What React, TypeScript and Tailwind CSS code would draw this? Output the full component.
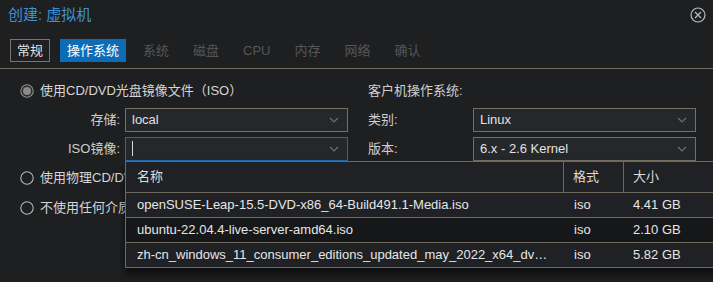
import React from "react";

const FONT = { fontFamily: '"Liberation Sans", "Noto Sans CJK SC", sans-serif' };

function Chevron() {
  return (
    <svg width="10" height="6" viewBox="0 0 10 6" className="shrink-0">
      <path d="M1 1 L5 5 L9 1" fill="none" stroke="#6f6f6f" strokeWidth="1.1" />
    </svg>
  );
}

function Select({ value, focus, caret }: { value?: string; focus?: boolean; caret?: boolean }) {
  return (
    <div
      className={`flex h-[24px] w-[223px] items-center justify-between border bg-[#25282a] pl-[6px] pr-[8px] ${
        focus ? "border-[#1b6db3]" : "border-[#77705f]"
      }`}
    >
      <span className="text-[13px] leading-[22px] text-[#e2e2e2]">
        {caret ? <span className="inline-block h-[15px] w-[1px] translate-y-[3px] bg-[#d8d8d8]" /> : value}
      </span>
      <Chevron />
    </div>
  );
}

function Radio({ checked }: { checked?: boolean }) {
  return (
    <svg width="14" height="14" viewBox="0 0 14 14" className="shrink-0">
      <circle cx="7" cy="7" r="6.2" fill={checked ? "#2b2c2e" : "none"} stroke={checked ? "#8d8d8d" : "#b5b5b5"} strokeWidth="1.1" />
      {checked && <circle cx="7" cy="7" r="4" fill="#8a8a8a" />}
    </svg>
  );
}

export default function App() {
  const tabs = ["系统", "磁盘", "CPU", "内存", "网络", "确认"];
  const rows = [
    { name: "openSUSE-Leap-15.5-DVD-x86_64-Build491.1-Media.iso", size: "4.41 GB", bg: "bg-[#202124]" },
    { name: "ubuntu-22.04.4-live-server-amd64.iso", size: "2.10 GB", bg: "bg-[#161718]" },
    {
      name: "zh-cn_windows_11_consumer_editions_updated_may_2022_x64_dvd_8a3ab5f2.iso",
      size: "5.82 GB",
      bg: "bg-[#202124]",
    },
  ];
  return (
    <div className="relative h-[282px] w-[713px] overflow-hidden bg-[#1e1f21]" style={FONT}>
      {/* Title */}
      <div className="flex h-[30px] items-center justify-between pl-[8px] pr-[7px]">
        <span className="text-[15px] leading-[20px] text-[#3d91d6]">创建: 虚拟机</span>
        <svg width="16" height="16" viewBox="0 0 16 16">
          <circle cx="8" cy="8" r="7" fill="none" stroke="#bdbdbd" strokeWidth="1.2" />
          <path d="M5 5 L11 11 M11 5 L5 11" stroke="#bdbdbd" strokeWidth="1.2" />
        </svg>
      </div>
      {/* Tabs */}
      <div className="mt-[9px] flex gap-[10px] border-b border-[#756c5c] pb-[6px] pl-[10px]">
        <div className="border border-[#7c7468] px-[6px] text-[13px] leading-[21px] text-[#e4e4e4]">常规</div>
        <div className="border border-[#0d6cb6] bg-[#0d6cb6] px-[6px] text-[13px] leading-[21px] text-white">操作系统</div>
        {tabs.map((t) => (
          <div key={t} className="border border-transparent px-[6px] text-[13px] leading-[21px] text-[#565656]">
            {t}
          </div>
        ))}
      </div>
      {/* Body */}
      <div className="flex gap-[20px] pl-[20px] pt-[11px]">
        <div className="flex w-[328px] flex-col">
          <div className="flex h-[22px] items-center gap-[6px]">
            <Radio checked />
            <span className="text-[13px] text-[#d6d6d6]">使用CD/DVD光盘镜像文件（ISO）</span>
          </div>
          <div className="mt-[6px] flex items-center gap-[5px]">
            <span className="w-[100px] text-right text-[13px] text-[#cfcfcf]">存储:</span>
            <Select value="local" />
          </div>
          <div className="mt-[5px] flex items-center gap-[5px]">
            <span className="w-[100px] text-right text-[13px] text-[#cfcfcf]">ISO镜像:</span>
            <Select focus caret />
          </div>
          <div className="mt-[6px] flex h-[22px] items-center gap-[6px]">
            <Radio />
            <span className="text-[13px] text-[#d6d6d6]">使用物理CD/DVD驱动器</span>
          </div>
          <div className="mt-[8px] flex h-[22px] items-center gap-[6px]">
            <Radio />
            <span className="text-[13px] text-[#d6d6d6]">不使用任何介质</span>
          </div>
        </div>
        <div className="flex w-[328px] flex-col">
          <div className="flex h-[22px] items-center">
            <span className="text-[13px] text-[#cfcfcf]">客户机操作系统:</span>
          </div>
          <div className="mt-[6px] flex items-center">
            <span className="w-[105px] text-[13px] text-[#cfcfcf]">类别:</span>
            <Select value="Linux" />
          </div>
          <div className="mt-[5px] flex items-center">
            <span className="w-[105px] text-[13px] text-[#cfcfcf]">版本:</span>
            <Select value="6.x - 2.6 Kernel" />
          </div>
        </div>
      </div>
      {/* Dropdown */}
      <div className="absolute left-[125px] top-[161px] w-[620px] border border-b-0 border-[#6f685c] bg-[#202124] shadow-[0_6px_8px_rgba(0,0,0,0.6)]">
        <div className="flex h-[31px] border-b border-[#6f685c] bg-[#202124] text-[13px] text-[#dcdcdc]">
          <div className="flex w-[438px] items-center border-r border-[#6f685c] pl-[11px]">名称</div>
          <div className="flex w-[60px] items-center border-r border-[#6f685c] pl-[9px]">格式</div>
          <div className="flex flex-1 items-center pl-[9px]">大小</div>
        </div>
        {rows.map((r) => (
          <div key={r.name} className={`flex h-[25px] border-b border-[#6f685c] text-[13px] text-[#e6e6e6] ${r.bg}`}>
            <div className="flex w-[438px] items-center overflow-hidden pl-[11px] pr-[12px]">
              <span className="truncate">{r.name}</span>
            </div>
            <div className="flex w-[60px] items-center pl-[10px]">iso</div>
            <div className="flex flex-1 items-center pl-[9px]">{r.size}</div>
          </div>
        ))}
      </div>
    </div>
  );
}
